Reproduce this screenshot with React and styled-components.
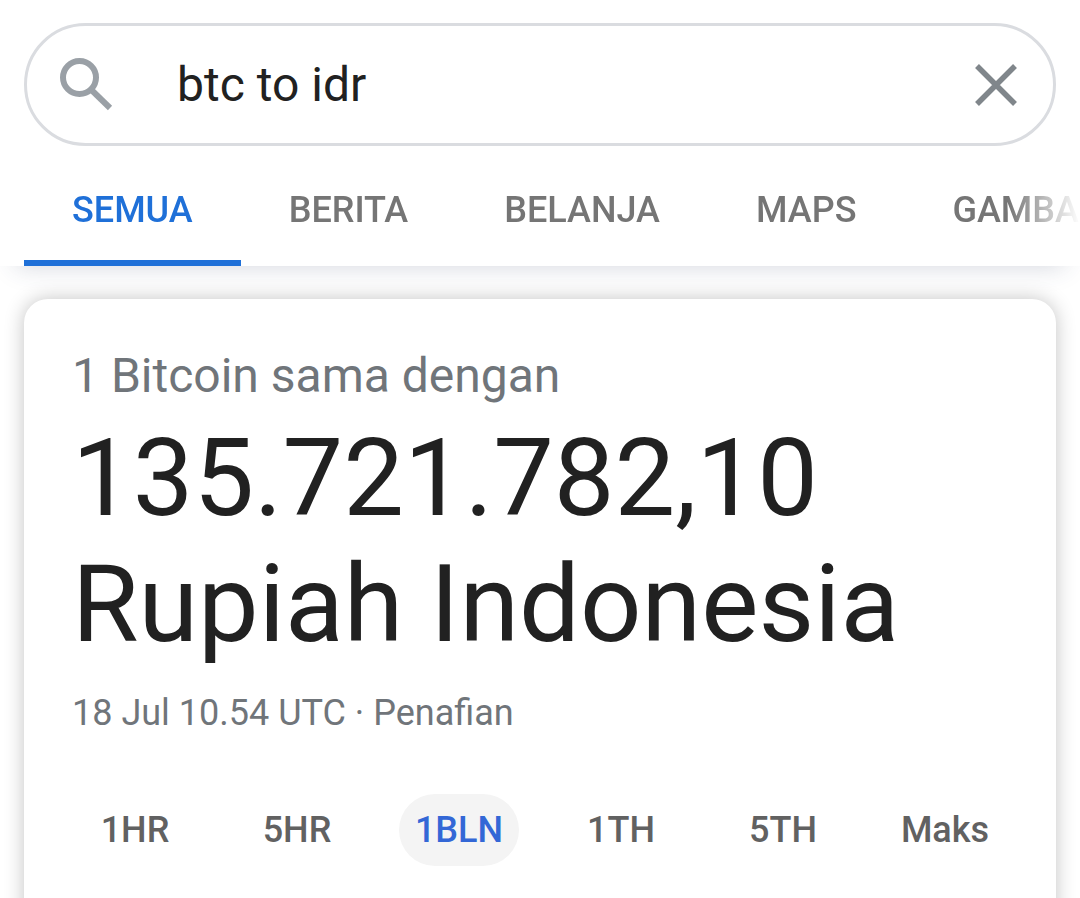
import { useState } from "react";
import styled, { createGlobalStyle } from "styled-components";

const GlobalStyle = createGlobalStyle`
  * {
    box-sizing: border-box;
  }

  body {
    margin: 0;
    background-color: #fff;
    color: #212121;
    font-family: Roboto, "Liberation Sans", sans-serif;
  }

  button,
  input {
    font-family: inherit;
  }
`;

const Page = styled.div`
  min-height: 100vh;
  display: flex;
  flex-direction: column;
`;

const Header = styled.header`
  padding-top: 23px;
  background-color: #fff;
  box-shadow: 0 16px 24px -16px rgba(50, 65, 100, 0.22);
`;

const SearchForm = styled.form`
  display: flex;
  align-items: center;
  height: 123px;
  margin: 0 24px;
  padding: 0 36px 0 32px;
  border: solid 3px #dadce0;
  border-radius: 62px;
`;

const IconButton = styled.button`
  display: flex;
  padding: 0;
  border: none;
  background: none;
  cursor: pointer;
`;

const SearchInput = styled.input`
  flex: 1;
  min-width: 0;
  margin: 0 24px 0 62px;
  padding: 0;
  border: none;
  outline: none;
  background: none;
  color: #212121;
  font-size: 48px;
  line-height: 60px;
`;

const Tabs = styled.nav`
  display: flex;
  margin-top: 6px;
  padding-left: 24px;
  overflow-x: auto;
  scrollbar-width: none;
  mask-image: linear-gradient(to left, transparent, #000 72px);
`;

const Tab = styled.a`
  flex-shrink: 0;
  padding: 34px 48px 26px;
  border-bottom: solid 6px ${(props) => (props.$active ? "#1f70d8" : "transparent")};
  color: ${(props) => (props.$active ? "#1f70d8" : "#757575")};
  font-size: 36px;
  font-weight: 500;
  line-height: 48px;
  text-decoration: none;
  text-transform: uppercase;
`;

const Card = styled.main`
  flex: 1;
  margin: 33px 24px 0;
  padding: 47px 30px 64px;
  border-radius: 24px 24px 0 0;
  background-color: #fff;
  box-shadow: 0 0 20px rgba(0, 0, 0, 0.24);
`;

const Rate = styled.section`
  padding: 0 18px;
`;

const RateLabel = styled.div`
  color: #70757a;
  font-size: 48px;
  line-height: 60px;
`;

const RateValue = styled.h1`
  margin: 9px 0 0;
  font-size: 108px;
  font-weight: 400;
  line-height: 126px;
`;

const RateInfo = styled.div`
  margin-top: 22px;
  color: #70757a;
  font-size: 36px;
  line-height: 48px;

  a {
    color: inherit;
    text-decoration: none;
  }
`;

const Ranges = styled.div`
  display: grid;
  grid-template-columns: repeat(6, 1fr);
  justify-items: center;
  margin-top: 57px;
`;

const RangeButton = styled.button`
  height: 72px;
  padding: 0 16px;
  border: none;
  border-radius: 36px;
  background-color: ${(props) => (props.$active ? "#f4f4f4" : "transparent")};
  color: ${(props) => (props.$active ? "#3367d6" : "#616161")};
  font-size: 36px;
  font-weight: 500;
  cursor: pointer;
`;

const tabs = ["Semua", "Berita", "Belanja", "Maps", "Gambar"];
const ranges = ["1HR", "5HR", "1BLN", "1TH", "5TH", "Maks"];

function SearchIcon() {
  return (
    <svg width="56" height="56" viewBox="0 0 56 56" fill="none" stroke="#9aa0a6">
      <circle cx="20.5" cy="20.5" r="16.5" strokeWidth="6" />
      <path d="M33 33.500L51 51" strokeWidth="6" />
      <path d="M30 31L36 36" strokeWidth="3" />
    </svg>
  );
}

function ClearIcon() {
  return (
    <svg width="42" height="42" viewBox="0 0 42 42" fill="none" stroke="#80868b">
      <path d="M2 2L40 40M40 2L2 40" strokeWidth="5.500" />
    </svg>
  );
}

export default function App() {
  const [query, setQuery] = useState("btc to idr");
  const [activeTab, setActiveTab] = useState("Semua");
  const [range, setRange] = useState("1BLN");

  return (
    <Page>
      <GlobalStyle />
      <Header>
        <SearchForm role="search" onSubmit={(e) => e.preventDefault()}>
          <IconButton type="submit" aria-label="Telusuri">
            <SearchIcon />
          </IconButton>
          <SearchInput
            type="text"
            aria-label="Kueri penelusuran"
            value={query}
            onChange={(e) => setQuery(e.target.value)}
          />
          <IconButton type="button" aria-label="Hapus" onClick={() => setQuery("")}>
            <ClearIcon />
          </IconButton>
        </SearchForm>

        <Tabs>
          {tabs.map((tab) => (
            <Tab
              key={tab}
              href="#"
              $active={tab === activeTab}
              onClick={() => setActiveTab(tab)}
            >
              {tab}
            </Tab>
          ))}
        </Tabs>
      </Header>

      <Card>
        <Rate>
          <RateLabel>1 Bitcoin sama dengan</RateLabel>
          <RateValue>135.721.782,10 Rupiah Indonesia</RateValue>
          <RateInfo>
            18 Jul 10.54 UTC · <a href="#">Penafian</a>
          </RateInfo>
        </Rate>

        <Ranges>
          {ranges.map((item) => (
            <RangeButton
              key={item}
              type="button"
              $active={item === range}
              onClick={() => setRange(item)}
            >
              {item}
            </RangeButton>
          ))}
        </Ranges>
      </Card>
    </Page>
  );
}
